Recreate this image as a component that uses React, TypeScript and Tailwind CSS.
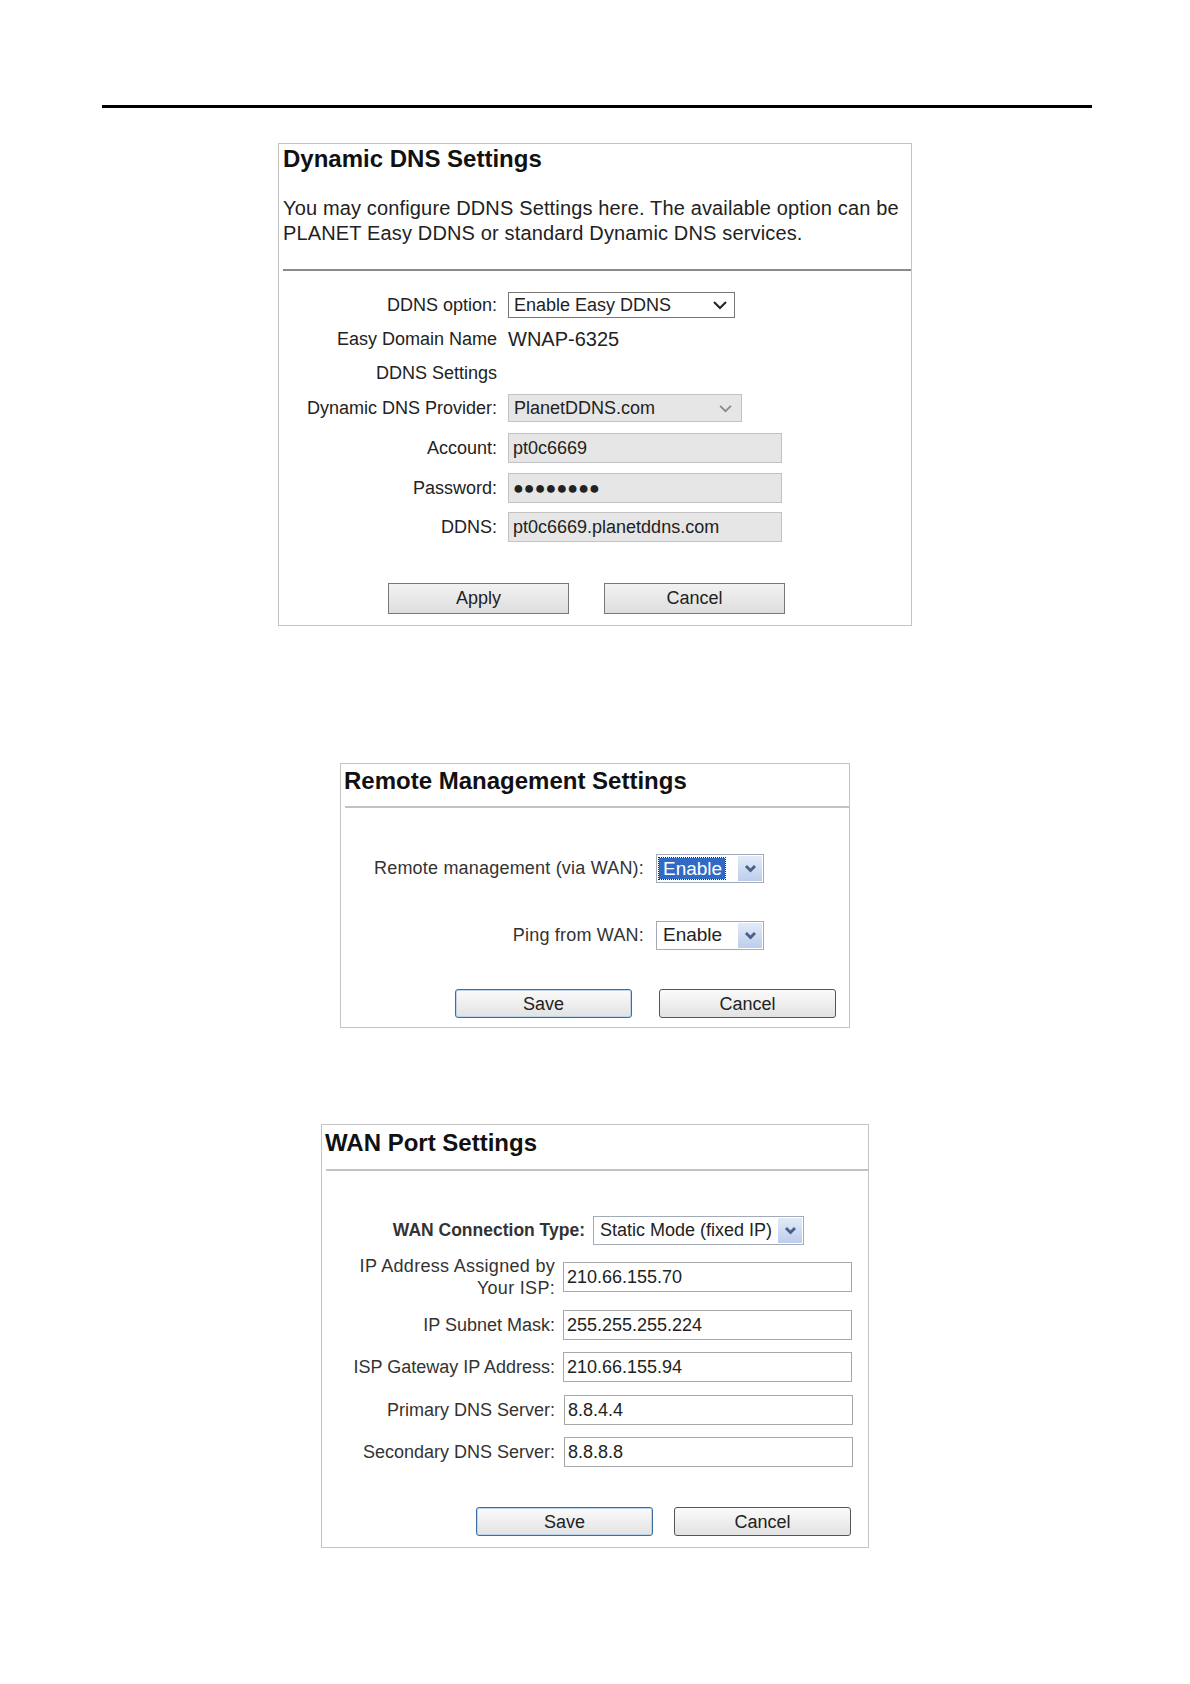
import React from "react";

const font = "font-['Liberation_Sans',Arial,sans-serif]";

const Chevron = ({ className }: { className: string }) => (
    <svg viewBox="0 0 16 10" className={className} fill="none">
        <path d="M2 2 L8 8 L14 2" stroke="currentColor" strokeWidth="2" />
    </svg>
);

const BlueArrow = () => (
    <div className="flex items-center justify-center w-[24px] self-stretch m-[1px] bg-gradient-to-b from-[#e3ebf8] to-[#bccdec]">
        <svg viewBox="0 0 10 7" className="w-[13px] h-[9px] text-[#4a5f86]" fill="none">
            <path d="M1.5 1.5 L5 5 L8.5 1.5" stroke="currentColor" strokeWidth="2.2" />
        </svg>
    </div>
);

const Row1 = ({ label, children, h, mt }: { label: string; children?: React.ReactNode; h: string; mt: string }) => (
    <div className={`flex items-center ${h} ${mt}`}>
        <div className="w-[218px] text-right text-[18px] text-[#222]">{label}</div>
        <div className="ml-[11px] flex items-center">{children}</div>
    </div>
);

const GrayInput = ({ value }: { value: string }) => (
    <div className="w-[274px] h-[30px] bg-[#e6e6e6] border border-[#c2c2c2] flex items-center px-[4px] text-[18px] text-[#222]">{value}</div>
);

const DdnsPanel = () => (
    <div className="mt-[35px] mx-auto w-[634px] h-[483px] border border-[#c4c4c4]">
        <div className="pt-[1px] px-[4px]">
            <h3 className="text-[24px] leading-[28px] font-bold text-[#111]">Dynamic DNS Settings</h3>
            <p className="mt-[23px] text-[20px] leading-[25px] tracking-[0.15px] text-[#222]">
                You may configure DDNS Settings here. The available option can be<br />
                PLANET Easy DDNS or standard Dynamic DNS services.
            </p>
        </div>
        <div className="mt-[23px] ml-[4px] h-[2px] bg-[#8a8a8a]" />
        <Row1 label="DDNS option:" h="h-[26px]" mt="mt-[21px]">
            <div className="w-[227px] h-[26px] border border-[#777] bg-white flex items-center justify-between pl-[5px] pr-[6px] text-[18px] text-[#222]">
                <span>Enable Easy DDNS</span>
                <Chevron className="w-[16px] h-[10px] text-[#222]" />
            </div>
        </Row1>
        <Row1 label="Easy Domain Name" h="h-[26px]" mt="mt-[8px]">
            <span className="text-[20px] text-[#222]">WNAP-6325</span>
        </Row1>
        <Row1 label="DDNS Settings" h="h-[26px]" mt="mt-[8px]" />
        <Row1 label="Dynamic DNS Provider:" h="h-[28px]" mt="mt-[8px]">
            <div className="w-[234px] h-[28px] border border-[#c2c2c2] bg-[#e6e6e6] flex items-center justify-between pl-[5px] pr-[8px] text-[18px] text-[#222]">
                <span>PlanetDDNS.com</span>
                <Chevron className="w-[15px] h-[9px] text-[#8a8a8a]" />
            </div>
        </Row1>
        <Row1 label="Account:" h="h-[30px]" mt="mt-[11px]">
            <GrayInput value="pt0c6669" />
        </Row1>
        <Row1 label="Password:" h="h-[30px]" mt="mt-[10px]">
            <GrayInput value="●●●●●●●●" />
        </Row1>
        <Row1 label="DDNS:" h="h-[30px]" mt="mt-[9px]">
            <GrayInput value="pt0c6669.planetddns.com" />
        </Row1>
        <div className="mt-[41px] flex pl-[109px] gap-[35px]">
            <button className="w-[181px] h-[31px] border border-[#777] bg-gradient-to-b from-[#f2f2f2] to-[#dedede] text-[18px] text-[#222]">Apply</button>
            <button className="w-[181px] h-[31px] border border-[#777] bg-gradient-to-b from-[#f2f2f2] to-[#dedede] text-[18px] text-[#222]">Cancel</button>
        </div>
    </div>
);

const XpButton = ({ label, primary }: { label: string; primary?: boolean }) => (
    <button
        className={`w-[177px] h-[29px] rounded-[3px] border ${primary ? "border-[#3b6fa3] shadow-[inset_0_0_0_1px_#bcd3ec]" : "border-[#555]"} bg-gradient-to-b from-[#fbfbfb] to-[#e2e2e2] text-[18px] leading-[20px] text-[#222]`}
    >
        {label}
    </button>
);

const RemotePanel = () => (
    <div className="mt-[137px] mx-auto w-[510px] h-[265px] border border-[#c4c4c4]">
        <h3 className="pt-[3px] px-[3px] text-[24px] leading-[28px] font-bold text-[#111]">Remote Management Settings</h3>
        <div className="mt-[11px] ml-[4px] h-[2px] bg-[#c2c2c2]" />
        <div className="mt-[46px] flex items-center h-[29px]">
            <div className="w-[303px] text-right text-[18px] tracking-[0.2px] text-[#333]">Remote management (via WAN):</div>
            <div className="ml-[12px] w-[108px] h-[29px] border border-[#a3abb8] bg-white flex items-stretch">
                <div className="flex-1 m-[2px] flex items-center">
                    <span className="w-[66px] bg-[#316ac5] text-white text-[19px] leading-[21px] pl-[4px] outline outline-1 outline-dotted outline-[#1a2e55]">Enable</span>
                </div>
                <BlueArrow />
            </div>
        </div>
        <div className="mt-[38px] flex items-center h-[29px]">
            <div className="w-[303px] text-right text-[18px] tracking-[0.2px] text-[#333]">Ping from WAN:</div>
            <div className="ml-[12px] w-[108px] h-[29px] border border-[#a3abb8] bg-white flex items-stretch">
                <div className="flex-1 flex items-center pl-[6px] text-[19px] text-[#222]">Enable</div>
                <BlueArrow />
            </div>
        </div>
        <div className="mt-[39px] flex pl-[114px] gap-[27px]">
            <XpButton label="Save" primary />
            <XpButton label="Cancel" />
        </div>
    </div>
);

const WanRow = ({ label, value, mt, wide }: { label: React.ReactNode; value: string; mt: string; wide?: boolean }) => (
    <div className={`flex items-center h-[30px] ${mt}`}>
        <div className="w-[233px] text-right text-[18px] leading-[22px] text-[#333]">{label}</div>
        <div className={`${wide ? "ml-[9px]" : "ml-[8px]"} w-[289px] h-[30px] border border-[#a8a8a8] bg-white flex items-center px-[3px] text-[18px] text-[#222]`}>{value}</div>
    </div>
);

const WanPanel = () => (
    <div className="mt-[96px] mx-auto w-[548px] h-[424px] border border-[#c4c4c4]">
        <h3 className="pt-[4px] px-[3px] text-[24px] leading-[28px] font-bold text-[#111]">WAN Port Settings</h3>
        <div className="mt-[12px] ml-[4px] h-[2px] bg-[#c2c2c2]" />
        <div className="mt-[45px] flex items-center h-[29px]">
            <div className="w-[263px] text-right text-[17.5px] font-bold text-[#333]">WAN Connection Type:</div>
            <div className="ml-[8px] w-[211px] h-[29px] border border-[#a3abb8] bg-white flex items-stretch">
                <div className="flex-1 flex items-center pl-[6px] text-[18px] text-[#222]">Static Mode (fixed IP)</div>
                <BlueArrow />
            </div>
        </div>
        <WanRow label={<span className="tracking-[0.3px]">IP Address Assigned by<br />Your ISP:</span>} value="210.66.155.70" mt="mt-[17px]" />
        <WanRow label="IP Subnet Mask:" value="255.255.255.224" mt="mt-[18px]" />
        <WanRow label="ISP Gateway IP Address:" value="210.66.155.94" mt="mt-[12px]" />
        <WanRow label="Primary DNS Server:" value="8.8.4.4" mt="mt-[13px]" wide />
        <WanRow label="Secondary DNS Server:" value="8.8.8.8" mt="mt-[12px]" wide />
        <div className="mt-[40px] flex pl-[154px] gap-[21px]">
            <XpButton label="Save" primary />
            <XpButton label="Cancel" />
        </div>
    </div>
);

const App = () => {
    return (
        <div className={`w-[1190px] min-h-[1684px] bg-white pt-[105px] ${font}`}>
            <div className="ml-[102px] w-[990px] h-[3px] bg-black" />
            <DdnsPanel />
            <RemotePanel />
            <WanPanel />
        </div>
    );
};

export default App;
